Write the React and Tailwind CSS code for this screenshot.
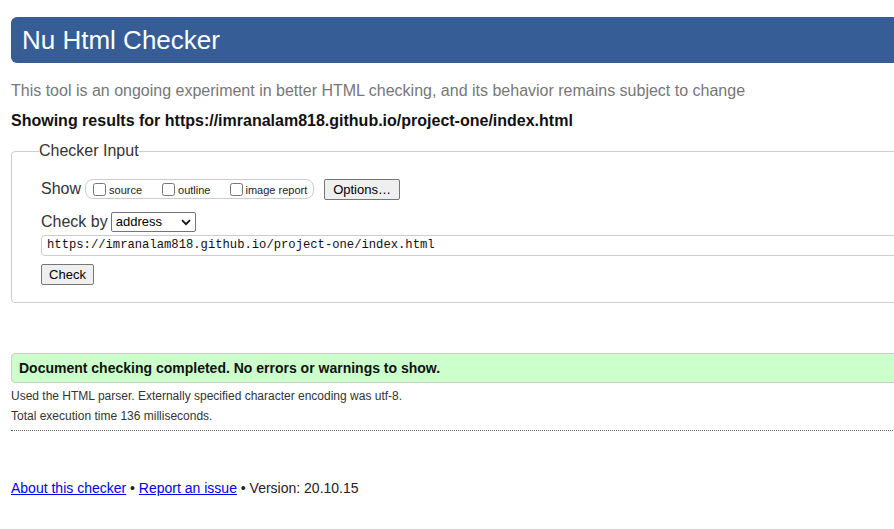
export default function App() {
  return (
    <div className="w-[894px] h-[529px] overflow-hidden bg-white font-['Liberation_Sans',Arial,sans-serif] text-[#222]">
      <div className="w-[1000px] pl-[11px] pt-[17px]">

        {/* title bar */}
        <header className="h-[46px] bg-[#365d95] rounded-l-[6px] pl-[11px] flex items-center">
          <h1 className="text-[26px] leading-[30px] text-white font-normal">Nu Html Checker</h1>
        </header>

        <p className="mt-[19px] text-[16px] leading-[18px] text-[#777]">
          This tool is an ongoing experiment in better HTML checking, and its behavior remains subject to change
        </p>
        <p className="mt-[12px] text-[16px] leading-[18px] font-bold text-[#111]">
          Showing results for https://imranalam818.github.io/project-one/index.html
        </p>

        {/* checker input */}
        <fieldset className="mt-[12px] w-[980px] border border-[#ccc] rounded-[4px] pl-[29px] pt-[18px] pb-[16px]">
          <legend className="-ml-[2px] text-[16px] leading-[18px] text-[#333]">Checker Input</legend>

          <div className="h-[22px] flex items-center">
            <span className="text-[16px] text-[#333] mr-[4px]">Show</span>
            <div className="h-[20px] w-[229px] border border-[#ccc] rounded-[8px] flex items-center pl-[7px] text-[11px] text-[#222]">
              <label className="flex items-center">
                <input type="checkbox" className="w-[13px] h-[13px] m-0 mr-[3px]" />
                <span className="pt-[2px]">source</span>
              </label>
              <label className="flex items-center ml-[20px]">
                <input type="checkbox" className="w-[13px] h-[13px] m-0 mr-[3px]" />
                <span className="pt-[2px]">outline</span>
              </label>
              <label className="flex items-center ml-[20px]">
                <input type="checkbox" className="w-[13px] h-[13px] m-0 mr-[2px]" />
                <span className="pt-[2px]">image report</span>
              </label>
            </div>
            <button className="ml-[10px] h-[21px] w-[76px] bg-[#efefef] border border-[#767676] rounded-[2px] text-[13px] text-black leading-none">
              Options…
            </button>
          </div>

          <div className="mt-[11px] h-[21px] flex items-center">
            <span className="text-[16px] text-[#333] mr-[3px]">Check by</span>
            <div className="relative h-[20px] w-[85px] border border-[#767676] rounded-[2px] bg-white flex items-center pl-[4px] text-[13px] text-black">
              <span>address</span>
              <svg className="absolute right-[4px] top-[6px]" width="10" height="7" viewBox="0 0 10 7">
                <path d="M1 1.2 L5 5.2 L9 1.2" fill="none" stroke="#111" strokeWidth="1.8" />
              </svg>
            </div>
          </div>

          <div className="mt-[3px] h-[21px] border border-[#ccc] rounded-[4px] bg-white flex items-center pl-[5px] font-['Liberation_Mono',monospace] text-[12.2px] text-[#111]">
            https://imranalam818.github.io/project-one/index.html
          </div>

          <button className="mt-[8px] h-[21px] w-[53px] bg-[#efefef] border border-[#767676] rounded-[2px] text-[13px] text-black leading-none">
            Check
          </button>
        </fieldset>

        {/* result */}
        <div className="mt-[50px] h-[30px] w-[980px] bg-[#ccffcc] border border-[#ccc] rounded-l-[4px] flex items-center pl-[7px]">
          <p className="text-[14px] font-bold text-[#111]">Document checking completed. No errors or warnings to show.</p>
        </div>
        <p className="mt-[3px] text-[12px] leading-[20px] text-[#333]">
          Used the HTML parser. Externally specified character encoding was utf-8.
        </p>
        <p className="text-[12px] leading-[20px] text-[#333]">Total execution time 136 milliseconds.</p>
        <div className="mt-[4px] w-[980px] border-t border-dotted border-[#666]"></div>

        {/* footer */}
        <p className="mt-[48px] text-[14px] leading-[18px] text-[#222]">
          <a href="#" className="text-[#0000ee] underline">About this checker</a>
          {" • "}
          <a href="#" className="text-[#0000ee] underline">Report an issue</a>
          {" • Version: 20.10.15"}
        </p>
      </div>
    </div>
  );
}
